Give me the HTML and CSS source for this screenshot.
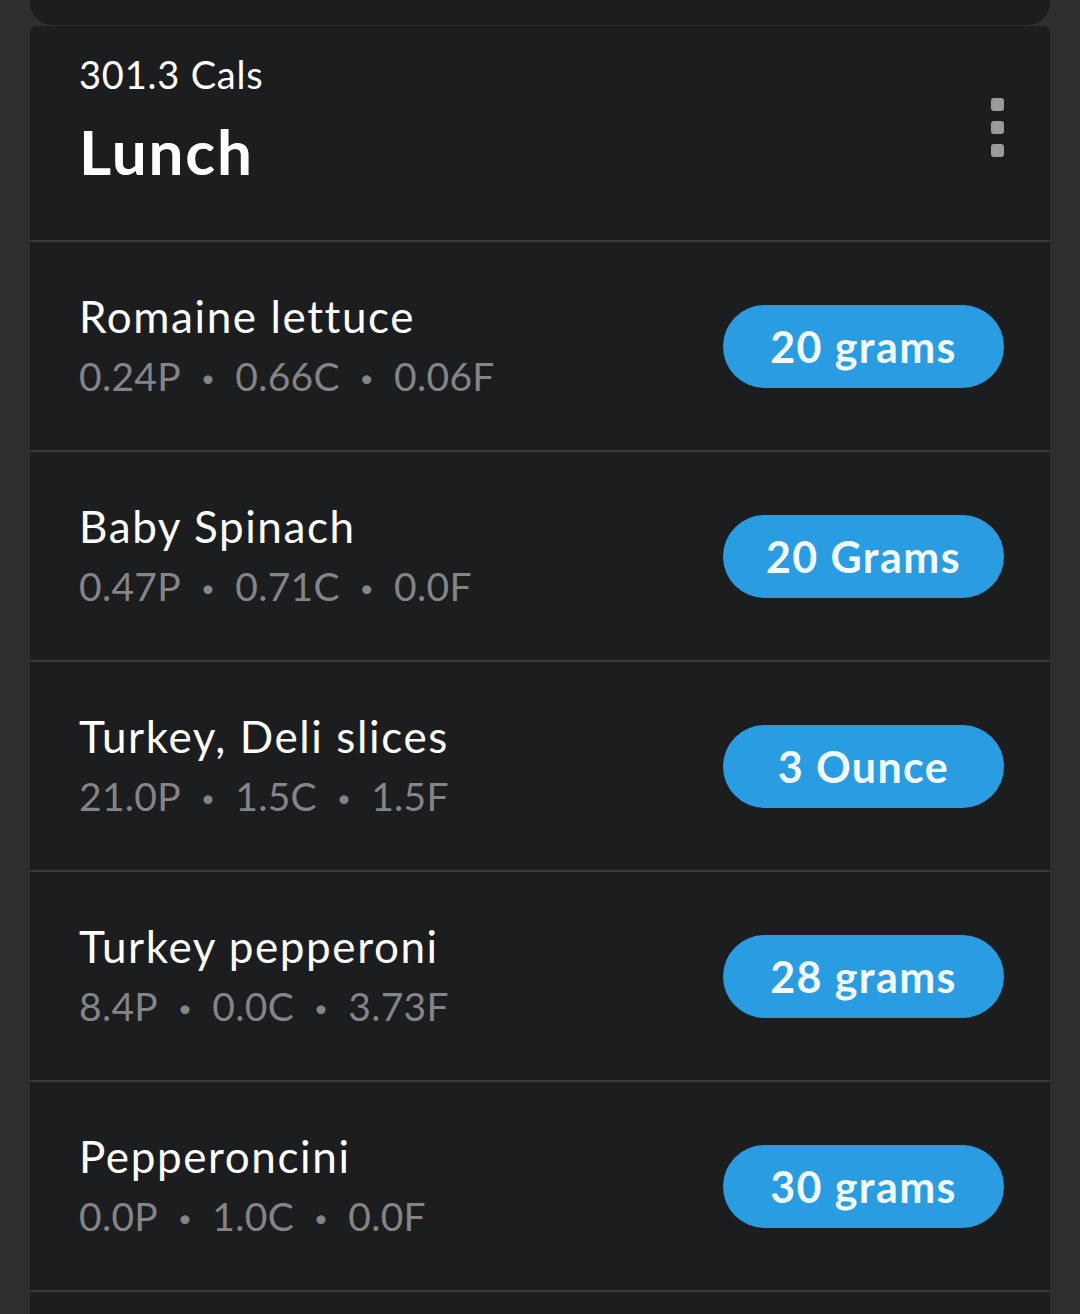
FILE: index.html
```html
<!DOCTYPE html>
<html lang="en">
<head>
    <meta charset="UTF-8">
    <meta name="viewport" content="width=device-width, initial-scale=1.0">
    <title>Lunch</title>
    <link rel="stylesheet" href="styles.css">
</head>
<body>
    <div class="prev-card"></div>

    <div class="meal-card">
        <div class="meal-header">
            <div class="meal-info">
                <div class="cals">301.3 Cals</div>
                <h1 class="meal-title">Lunch</h1>
            </div>
            <div class="menu-btn">
                <span class="dot"></span>
                <span class="dot"></span>
                <span class="dot"></span>
            </div>
        </div>

        <div class="food-row">
            <div class="food-info">
                <div class="food-name">Romaine lettuce</div>
                <div class="macros">0.24P<span class="sep">•</span>0.66C<span class="sep">•</span>0.06F</div>
            </div>
            <div class="amount">20 grams</div>
        </div>

        <div class="food-row">
            <div class="food-info">
                <div class="food-name">Baby Spinach</div>
                <div class="macros">0.47P<span class="sep">•</span>0.71C<span class="sep">•</span>0.0F</div>
            </div>
            <div class="amount">20 Grams</div>
        </div>

        <div class="food-row">
            <div class="food-info">
                <div class="food-name">Turkey, Deli slices</div>
                <div class="macros">21.0P<span class="sep">•</span>1.5C<span class="sep">•</span>1.5F</div>
            </div>
            <div class="amount">3 Ounce</div>
        </div>

        <div class="food-row">
            <div class="food-info">
                <div class="food-name">Turkey pepperoni</div>
                <div class="macros">8.4P<span class="sep">•</span>0.0C<span class="sep">•</span>3.73F</div>
            </div>
            <div class="amount">28 grams</div>
        </div>

        <div class="food-row">
            <div class="food-info">
                <div class="food-name">Pepperoncini</div>
                <div class="macros">0.0P<span class="sep">•</span>1.0C<span class="sep">•</span>0.0F</div>
            </div>
            <div class="amount">30 grams</div>
        </div>

        <div class="food-row"></div>
    </div>
</body>
</html>
```

FILE: styles.css
```css
body {
    font-family: Lato, "Open Sans", sans-serif;
    margin: 0;
    padding: 0 30px;
    background-color: #2f2f2f;
    color: #fff;
    height: 1314px;
    overflow: hidden;
}
.prev-card {
    height: 25px;
    background-color: #1c1d1f;
    border-radius: 0 0 22px 22px;
}
.meal-card {
    margin-top: 1px;
    background-color: #1c1d1f;
    border-radius: 6px 6px 0 0;
}
.meal-header {
    display: flex;
    justify-content: space-between;
    align-items: flex-start;
    height: 216px;
    padding: 0 46px 0 49px;
    border-bottom: 2px solid #3a3a3c;
    box-sizing: border-box;
}
.cals {
    margin-top: 26px;
    font-size: 38px;
    line-height: 44px;
    letter-spacing: 0.8px;
}
.meal-title {
    margin: 20px 0 0;
    font-size: 62px;
    font-weight: bold;
    line-height: 70px;
    letter-spacing: 1.8px;
}
.menu-btn {
    display: flex;
    flex-direction: column;
    gap: 10px;
    margin-top: 72px;
}
.dot {
    display: block;
    width: 13px;
    height: 13px;
    border-radius: 3px;
    background-color: #9b9b9d;
}
.food-row {
    display: flex;
    justify-content: space-between;
    align-items: center;
    height: 210px;
    padding: 0 46px 0 49px;
    border-bottom: 2px solid #3a3a3c;
    box-sizing: border-box;
}
.food-name {
    font-size: 44px;
    line-height: 54px;
    letter-spacing: 1.6px;
}
.macros {
    margin-top: 8px;
    font-size: 39px;
    line-height: 50px;
    letter-spacing: 0.3px;
    color: #858587;
}
.sep {
    font-size: 24px;
    margin: 0 20px;
    vertical-align: 4px;
}
.amount {
    width: 281px;
    height: 83px;
    line-height: 83px;
    border-radius: 42px;
    background-color: #2a9ce1;
    text-align: center;
    font-size: 43px;
    font-weight: bold;
    letter-spacing: 1.4px;
    color: #f0faff;
}
```
